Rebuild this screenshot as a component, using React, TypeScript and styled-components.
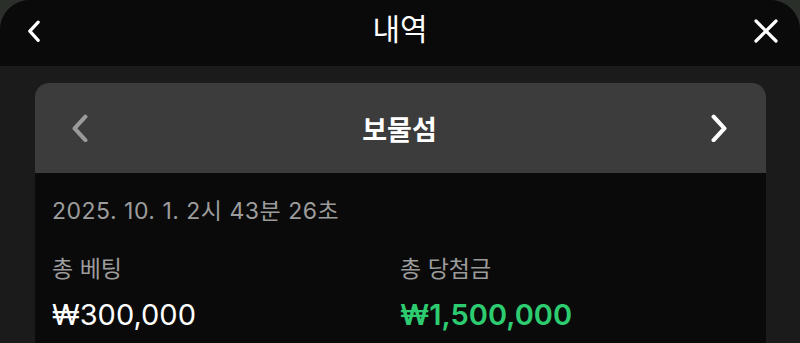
import React from "react";
import styled, { createGlobalStyle } from "styled-components";

const GlobalStyle = createGlobalStyle`
  html, body {
    margin: 0;
    padding: 0;
    background: #2a2f2a;
    overflow: hidden;
    font-family: Inter, "Noto Sans CJK KR", sans-serif;
  }
`;

const Sheet = styled.div`
  width: 800px;
  height: 343px;
  border-radius: 30px 30px 0 0;
  overflow: hidden;
  background: #1b1b1b;
  display: flex;
  flex-direction: column;
`;

const TopBar = styled.header`
  height: 66px;
  flex-shrink: 0;
  background: #0a0a0a;
  display: flex;
  align-items: center;
  justify-content: space-between;
  padding: 0 21px 4px 21px;
  box-sizing: border-box;
`;

const Title = styled.h1`
  margin: 0 0 8px;
  color: #fff;
  font-family: "Noto Sans CJK KR", sans-serif;
  font-weight: 400;
  font-size: 30px;
  line-height: 36px;
`;

const IconButton = styled.button`
  background: transparent;
  border: none;
  padding: 0;
  width: 26px;
  height: 26px;
  display: flex;
  align-items: center;
  justify-content: center;
  cursor: pointer;
`;

const Body = styled.main`
  flex: 1;
  display: flex;
  padding: 17px 34px 0 35px;
`;

const Card = styled.section`
  flex: 1;
  border-radius: 14px 14px 0 0;
  overflow: hidden;
  background: #0a0a0a;
`;

const CardHead = styled.div`
  height: 90px;
  background: #3c3c3c;
  display: flex;
  align-items: center;
  justify-content: space-between;
  padding: 0 34px 0 32px;
`;

const GameName = styled.h2`
  margin: 0;
  color: #fff;
  font-size: 27px;
  font-weight: 600;
`;

const CardBody = styled.div`
  padding: 22px 17px 0 17px;
`;

const DateText = styled.div`
  color: #9c9c9c;
  font-size: 23px;
  line-height: 32px;
  letter-spacing: 0.5px;
`;

const Stats = styled.div`
  display: grid;
  grid-template-columns: 348px 1fr;
  margin-top: 26px;
`;

const Stat = styled.div`
  display: flex;
  flex-direction: column;
  gap: 12px;
`;

const Label = styled.div`
  color: #9c9c9c;
  font-size: 23px;
  line-height: 32px;
`;

const Amount = styled.div<{ $win?: boolean }>`
  color: ${(p) => (p.$win ? "#2ecc71" : "#fff")};
  font-size: 29px;
  line-height: 36px;
  font-weight: ${(p) => (p.$win ? 600 : 400)};
`;

const Chevron = ({ dir, color, w }: { dir: "l" | "r"; color: string; w: number }) => (
  <svg width={w} height={w * 1.6} viewBox="0 0 10 16" fill="none">
    <path
      d={dir === "l" ? "M8 1.5 L2 8 L8 14.5" : "M2 1.5 L8 8 L2 14.5"}
      stroke={color}
      strokeWidth="2.3"
      strokeLinecap="round"
      strokeLinejoin="round"
    />
  </svg>
);

export default function App() {
  return (
    <>
      <GlobalStyle />
      <Sheet>
        <TopBar>
          <IconButton aria-label="뒤로">
            <Chevron dir="l" color="#fff" w={14} />
          </IconButton>
          <Title>내역</Title>
          <IconButton aria-label="닫기">
            <svg width="24" height="24" viewBox="0 0 24 24" fill="none">
              <path d="M2 2 L22 22 M22 2 L2 22" stroke="#fff" strokeWidth="3.2" strokeLinecap="round" />
            </svg>
          </IconButton>
        </TopBar>
        <Body>
          <Card>
            <CardHead>
              <IconButton aria-label="이전">
                <Chevron dir="l" color="#9a9a9a" w={18} />
              </IconButton>
              <GameName>보물섬</GameName>
              <IconButton aria-label="다음">
                <Chevron dir="r" color="#fff" w={18} />
              </IconButton>
            </CardHead>
            <CardBody>
              <DateText>2025. 10. 1. 2시 43분 26초</DateText>
              <Stats>
                <Stat>
                  <Label>총 베팅</Label>
                  <Amount>₩300,000</Amount>
                </Stat>
                <Stat>
                  <Label>총 당첨금</Label>
                  <Amount $win>₩1,500,000</Amount>
                </Stat>
              </Stats>
            </CardBody>
          </Card>
        </Body>
      </Sheet>
    </>
  );
}
